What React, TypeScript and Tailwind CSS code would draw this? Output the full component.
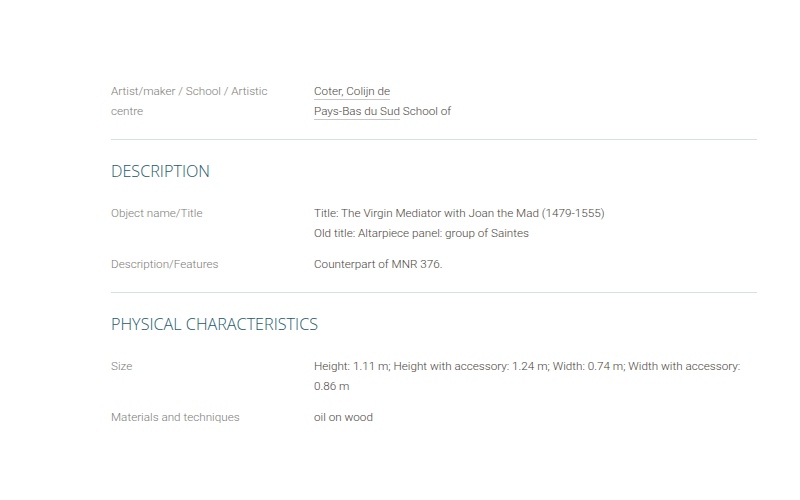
import React from 'react';

type Row = { label: string; value: React.ReactNode };

const Section = ({ title, rows }: { title?: string; rows: Row[] }) => (
  <section className="pt-[21px] pb-[18px] border-b border-[#d5e0e4] last:border-b-0">
    {title && (
      <h2 className="font-['Open_Sans',sans-serif] font-light text-[16.2px] leading-5 text-[#245a6a] uppercase mb-[22px]">
        {title}
      </h2>
    )}
    <div className="flex flex-col gap-[11px]">
      {rows.map((r) => (
        <div key={r.label} className="flex">
          <div className="w-[203px] shrink-0 pr-6 text-[#7d7b78]">{r.label}</div>
          <div className="flex-1 text-[#4a443d]">{r.value}</div>
        </div>
      ))}
    </div>
  </section>
);

const Link = ({ children }: { children: React.ReactNode }) => (
  <a className="border-b border-[#c9c9c9] pb-px">{children}</a>
);

export default function App() {
  return (
    <div className="min-h-[500px] bg-white pl-[111px] pr-[43px] pt-[81px] font-['Roboto',sans-serif] font-light text-[11.7px] leading-5">
      <section className="pb-[18px] border-b border-[#d5e0e4]">
        <div className="flex">
          <div className="w-[203px] shrink-0 pr-8 text-[#7d7b78]">Artist/maker / School / Artistic centre</div>
          <div className="flex-1 text-[#4a443d]">
            <div><Link>Coter, Colijn de</Link></div>
            <div><Link>Pays-Bas du Sud</Link> School of</div>
          </div>
        </div>
      </section>
      <Section
        title="Description"
        rows={[
          {
            label: 'Object name/Title',
            value: (
              <>
                <div>Title: The Virgin Mediator with Joan the Mad (1479-1555)</div>
                <div>Old title: Altarpiece panel: group of Saintes</div>
              </>
            ),
          },
          { label: 'Description/Features', value: 'Counterpart of MNR 376.' },
        ]}
      />
      <Section
        title="Physical characteristics"
        rows={[
          {
            label: 'Size',
            value: 'Height: 1.11 m; Height with accessory: 1.24 m; Width: 0.74 m; Width with accessory: 0.86 m',
          },
          { label: 'Materials and techniques', value: 'oil on wood' },
        ]}
      />
    </div>
  );
}
